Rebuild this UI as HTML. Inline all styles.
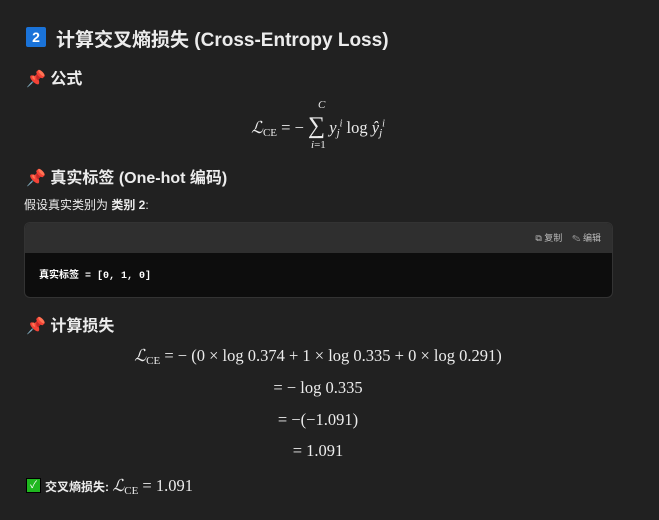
<!DOCTYPE html>
<html><head><meta charset="utf-8"><style>
body{margin:0;width:659px;height:520px;background:#212121;color:#ececec;font-family:"Liberation Sans","Noto Sans CJK SC",sans-serif;position:relative;overflow:hidden}
.a{position:absolute;white-space:nowrap}
.h{font-weight:bold;font-size:16px}
.m{font-family:"Liberation Serif",serif;font-size:16.5px}
.c{left:0;width:636px;text-align:center}
i{font-style:italic}
sub{font-size:11px;vertical-align:-3px}
</style></head><body>
<div class="a" style="left:26px;top:27px;width:20px;height:20px;background:#1a73d9;border-radius:2px;color:#fff;font-size:14px;font-weight:bold;text-align:center;line-height:20px">2</div>
<div class="a" style="left:56px;top:25px;font-size:19px;font-weight:bold">计算交叉熵损失 (Cross-Entropy Loss)</div>
<div class="a h" style="left:26px;top:65px"><span style="color:#e0321c">📌</span> 公式</div>
<div class="a m c" style="top:113px"><i>ℒ</i><sub>CE</sub> = − <span style="font-size:24px">∑</span> <i>y</i><sub><i>j</i></sub><sup style="font-size:10px"><i>i</i></sup> log <i>ŷ</i><sub><i>j</i></sub><sup style="font-size:10px"><i>i</i></sup></div>
<div class="a" style="left:318px;top:99px;font-family:'Liberation Serif';font-size:11px;font-style:italic">C</div>
<div class="a" style="left:311px;top:139px;font-family:'Liberation Serif';font-size:11px"><i>i</i>=1</div>
<div class="a h" style="left:26px;top:164px"><span style="color:#e0321c">📌</span> 真实标签 (One-hot 编码)</div>
<div class="a" style="left:24px;top:196px;font-size:12px">假设真实类别为 <b>类别 2</b>:</div>
<div class="a" style="left:24px;top:222px;width:587px;height:74px;border:1px solid #333;border-radius:6px;overflow:hidden;background:#0d0d0d">
<div style="height:30px;background:#2f2f2f;font-size:9px;color:#bbb;text-align:right;line-height:30px;padding-right:11px">⧉ 复制 &nbsp;&nbsp; ✎ 编辑</div>
<div style="padding:13px 0 0 14px;font-family:'Liberation Mono','Noto Sans CJK SC',monospace;font-size:10px;color:#fff;font-weight:bold">真实标签 = [0, 1, 0]</div>
</div>
<div class="a h" style="left:26px;top:312px"><span style="color:#e0321c">📌</span> 计算损失</div>
<div class="a m c" style="top:346px"><i>ℒ</i><sub>CE</sub> = − (0 × log 0.374 + 1 × log 0.335 + 0 × log 0.291)</div>
<div class="a m c" style="top:378px">= − log 0.335</div>
<div class="a m c" style="top:410px">= −(−1.091)</div>
<div class="a m c" style="top:441px">= 1.091</div>
<div class="a" style="left:26px;top:478px;width:13px;height:13px;background:#1fb81f;border:1px solid #000;color:#fff;font-size:10px;line-height:13px;text-align:center">✓</div>
<div class="a" style="left:45px;top:476px;font-size:12px;font-weight:bold">交叉熵损失: <span class="m" style="font-weight:normal"><i>ℒ</i><sub>CE</sub> = 1.091</span></div>
</body></html>
